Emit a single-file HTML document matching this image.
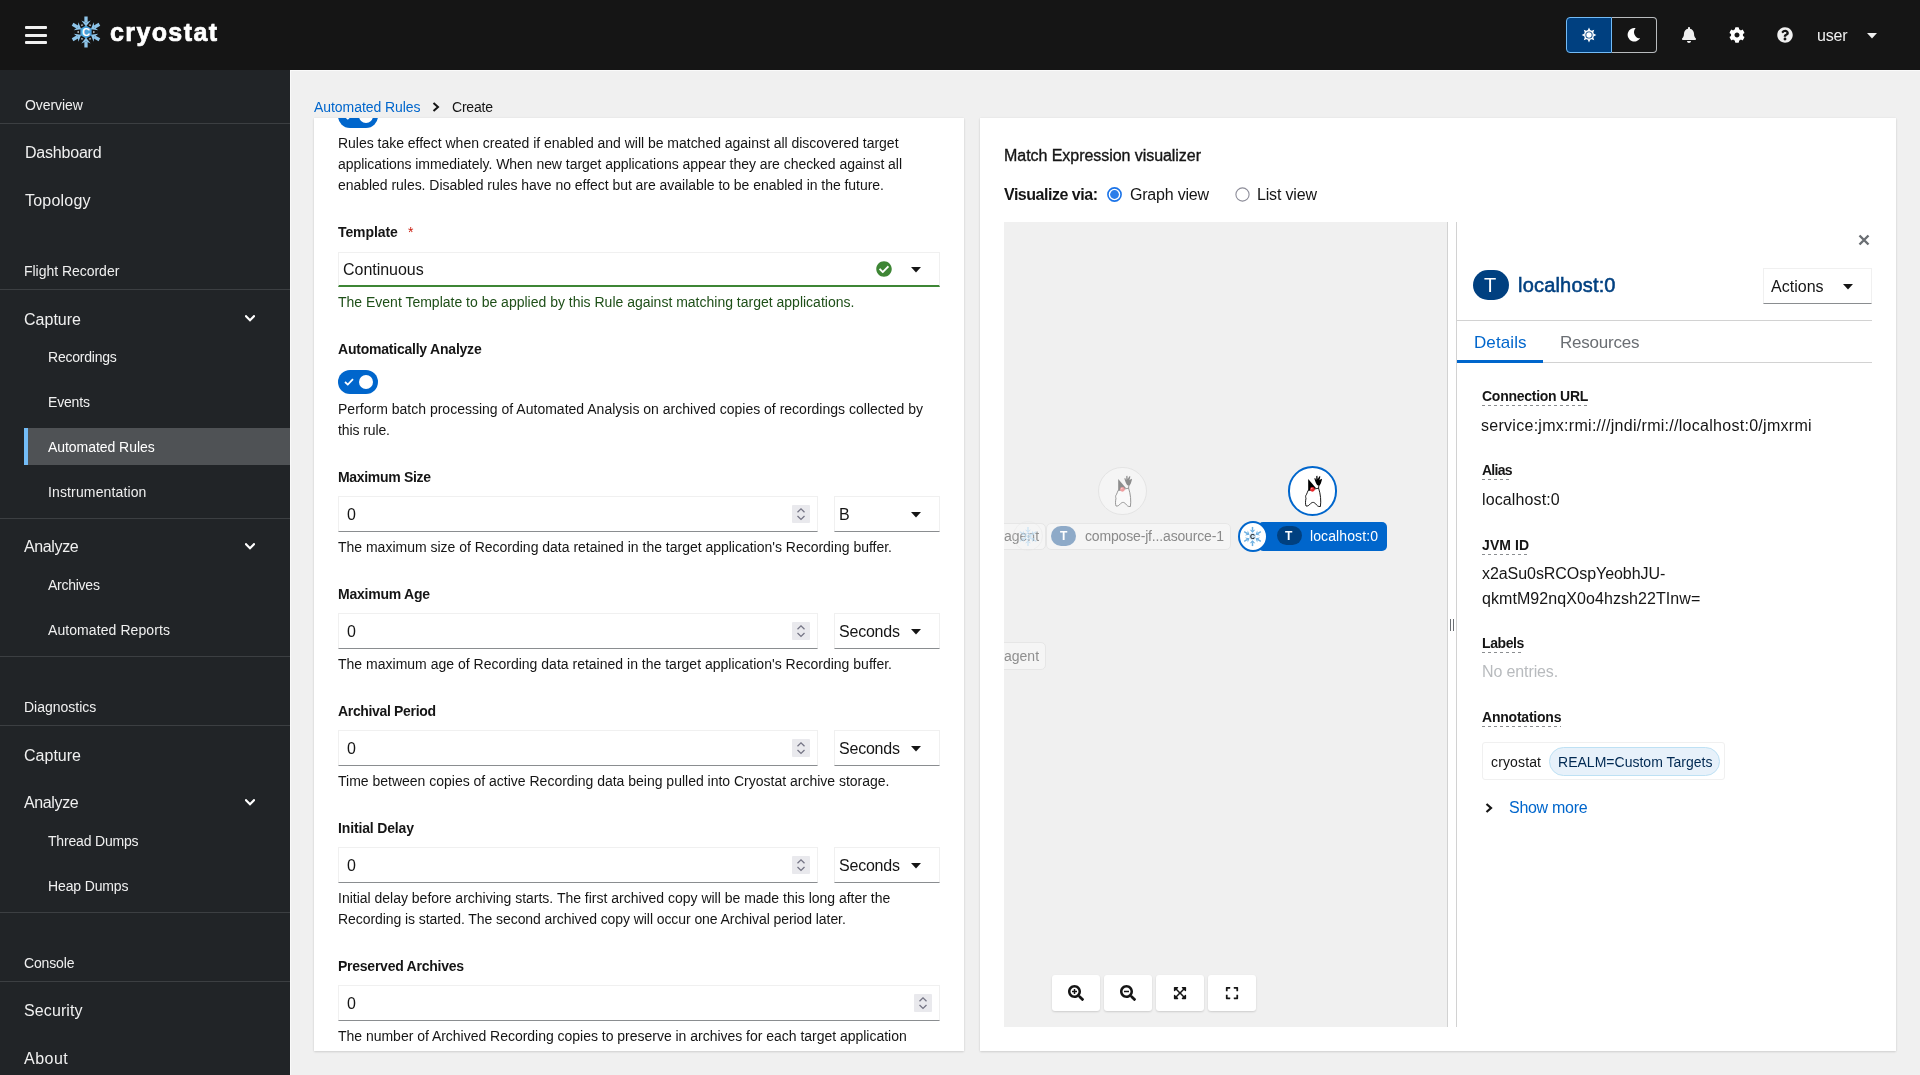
<!DOCTYPE html>
<html><head><meta charset="utf-8"><style>
html,body{margin:0;padding:0;width:1920px;height:1075px;overflow:hidden;background:#f0f0f0;font-family:"Liberation Sans",sans-serif}
.t{position:absolute;white-space:nowrap;will-change:transform}
</style></head><body>
<div style="position:absolute;left:0px;top:0px;width:1920px;height:70px;background:#151515"></div>
<div style="position:absolute;left:0px;top:70px;width:290px;height:1005px;background:#212427"></div>
<div style="position:absolute;left:290px;top:70px;width:1630px;height:1005px;background:#f0f0f0"></div>
<div style="position:absolute;left:290px;top:70px;width:1630px;height:1px;background:#fafafa"></div>
<div style="position:absolute;left:290px;top:70px;width:1px;height:1005px;background:#fafafa"></div>
<div style="position:absolute;left:25px;top:26px;width:22px;height:3px;background:#f0f0f0;border-radius:1px"></div>
<div style="position:absolute;left:25px;top:33.5px;width:22px;height:3px;background:#f0f0f0;border-radius:1px"></div>
<div style="position:absolute;left:25px;top:41px;width:22px;height:3px;background:#f0f0f0;border-radius:1px"></div>
<svg style="position:absolute;left:70px;top:15px;" width="32" height="34" viewBox="0 0 32 34"><line x1="16.00" y1="7.39" x2="16.00" y2="1.50" stroke="#8ec5ea" stroke-width="3.30"/><polygon points="16.00,11.42 11.35,5.53 16.00,7.39 20.65,5.53" fill="#8ec5ea"/><line x1="7.68" y1="12.20" x2="2.58" y2="9.25" stroke="#8ec5ea" stroke-width="3.30"/><polygon points="11.17,14.21 3.74,15.29 7.68,12.20 8.39,7.24" fill="#8ec5ea"/><line x1="7.68" y1="21.80" x2="2.58" y2="24.75" stroke="#8ec5ea" stroke-width="3.30"/><polygon points="11.17,19.79 8.39,26.76 7.68,21.80 3.74,18.71" fill="#8ec5ea"/><line x1="16.00" y1="26.61" x2="16.00" y2="32.50" stroke="#8ec5ea" stroke-width="3.30"/><polygon points="16.00,22.58 20.65,28.47 16.00,26.61 11.35,28.47" fill="#8ec5ea"/><line x1="24.32" y1="21.81" x2="29.42" y2="24.75" stroke="#8ec5ea" stroke-width="3.30"/><polygon points="20.83,19.79 28.26,18.71 24.32,21.81 23.61,26.76" fill="#8ec5ea"/><line x1="24.32" y1="12.20" x2="29.42" y2="9.25" stroke="#8ec5ea" stroke-width="3.30"/><polygon points="20.83,14.21 23.61,7.24 24.32,12.20 28.26,15.29" fill="#8ec5ea"/><polygon points="16.00,10.49 10.36,13.75 10.36,20.26 16.00,23.51 21.64,20.26 21.64,13.75" fill="#4a9fd8"/><polygon points="11.28,11.31 13.43,10.07 11.51,9.21" fill="#e8f4fc"/><polygon points="8.71,18.24 8.71,15.76 7.01,17.00" fill="#e8f4fc"/><polygon points="13.43,23.93 11.28,22.69 11.50,24.79" fill="#e8f4fc"/><polygon points="20.72,22.69 18.57,23.93 20.50,24.79" fill="#e8f4fc"/><polygon points="23.29,15.76 23.29,18.24 24.99,17.00" fill="#e8f4fc"/><polygon points="18.57,10.07 20.72,11.31 20.49,9.21" fill="#e8f4fc"/><text x="16.00" y="21.19" font-family="Liberation Sans" font-weight="700" font-size="11.16" fill="#fff" text-anchor="middle">C</text></svg>
<div id="t1" class="t" style="left:110.0px;top:20.00px;font-size:25px;line-height:25px;color:#ffffff;font-weight:700;letter-spacing:1.391px;-webkit-text-stroke:0.7px #fff;">cryostat</div>
<div style="position:absolute;left:1566px;top:17px;width:46px;height:36px;background:#004080;border:1.5px solid #73bcf7;border-radius:4px 0 0 4px;box-sizing:border-box"></div>
<div style="position:absolute;left:1612px;top:17px;width:45px;height:36px;background:#151515;border:1.5px solid #b8bbbe;border-left:none;border-radius:0 4px 4px 0;box-sizing:border-box"></div>
<svg style="position:absolute;left:1581px;top:27px;" width="16" height="16" viewBox="0 0 16 16"><polygon points="15.40,8.00 12.37,6.55 12.37,9.45" fill="#fff"/><polygon points="13.23,13.23 12.11,10.06 10.06,12.11" fill="#fff"/><polygon points="8.00,15.40 9.45,12.37 6.55,12.37" fill="#fff"/><polygon points="2.77,13.23 5.94,12.11 3.89,10.06" fill="#fff"/><polygon points="0.60,8.00 3.63,9.45 3.63,6.55" fill="#fff"/><polygon points="2.77,2.77 3.89,5.94 5.94,3.89" fill="#fff"/><polygon points="8.00,0.60 6.55,3.63 9.45,3.63" fill="#fff"/><polygon points="13.23,2.77 10.06,3.89 12.11,5.94" fill="#fff"/><circle cx="8" cy="8" r="4.9" fill="#fff"/><circle cx="8" cy="8" r="3.6" fill="#004080"/><circle cx="8" cy="8" r="2.7" fill="#fff"/></svg>
<svg style="position:absolute;left:1626px;top:27px;" width="14" height="15" viewBox="0 0 14 15"><path d="M9.6 1.0 A6.8 6.8 0 1 0 14.2 11.3 A6.2 6.2 0 0 1 9.6 1.0 Z" fill="#fff"/></svg>
<svg style="position:absolute;left:1682px;top:26px;" width="14" height="18" viewBox="0 0 448 512"><path fill="#f0f0f0" d="M224 512c35.3 0 64-28.7 64-64H160c0 35.3 28.7 64 64 64zm215.4-149.7c-19.3-20.8-55.5-52-55.5-154.3 0-77.7-54.5-139.9-127.9-155.2V32c0-17.7-14.3-32-32-32s-32 14.3-32 32v20.8C118.6 68.1 64.1 130.3 64.1 208c0 102.3-36.2 133.5-55.5 154.3-6 6.4-8.6 14.1-8.6 21.7.1 16.4 13 32 32.1 32h383.8c19.1 0 32-15.6 32.1-32 .1-7.6-2.6-15.3-8.6-21.7z"/></svg>
<svg style="position:absolute;left:1729px;top:27px;" width="16" height="16" viewBox="0 0 512 512"><path fill="#fff" d="M487.4 315.7l-42.6-24.6c4.3-23.2 4.3-47 0-70.2l42.6-24.6c4.9-2.8 7.1-8.6 5.5-14-11.1-35.6-30-67.8-54.7-94.6-3.8-4.1-10-5.1-14.8-2.3L380.8 110c-17.9-15.4-38.5-27.3-60.8-35.1V25.8c0-5.6-3.9-10.5-9.4-11.7-36.7-8.2-74.3-7.8-109.2 0-5.5 1.2-9.4 6.1-9.4 11.7V75c-22.2 7.9-42.8 19.8-60.8 35.1L88.7 85.5c-4.9-2.8-11-1.9-14.8 2.3-24.7 26.7-43.6 58.9-54.7 94.6-1.7 5.4.6 11.2 5.5 14L67.3 221c-4.3 23.2-4.3 47 0 70.2l-42.6 24.6c-4.9 2.8-7.1 8.6-5.5 14 11.1 35.6 30 67.8 54.7 94.6 3.8 4.1 10 5.1 14.8 2.3l42.6-24.6c17.9 15.4 38.5 27.3 60.8 35.1v49.2c0 5.6 3.9 10.5 9.4 11.7 36.7 8.2 74.3 7.8 109.2 0 5.5-1.2 9.4-6.1 9.4-11.7v-49.2c22.2-7.9 42.8-19.8 60.8-35.1l42.6 24.6c4.9 2.8 11 1.9 14.8-2.3 24.7-26.7 43.6-58.9 54.7-94.6 1.5-5.5-.7-11.3-5.6-14.1zM256 336c-44.1 0-80-35.9-80-80s35.9-80 80-80 80 35.9 80 80-35.9 80-80 80z"/></svg>
<svg style="position:absolute;left:1777px;top:27px;" width="16" height="16" viewBox="0 0 512 512"><path fill="#f0f0f0" d="M504 256c0 136.997-111.043 248-248 248S8 392.997 8 256C8 119.083 119.043 8 256 8s248 111.083 248 248zM262.655 90c-54.497 0-89.255 22.957-116.549 63.758-3.536 5.286-2.353 12.415 2.715 16.258l34.699 26.31c5.205 3.947 12.621 3.008 16.665-2.122 17.864-22.658 30.113-35.797 57.303-35.797 20.429 0 45.698 13.148 45.698 32.958 0 14.976-12.363 22.667-32.534 33.976C247.128 238.528 216 254.941 216 296v4c0 6.627 5.373 12 12 12h56c6.627 0 12-5.373 12-12v-1.333c0-28.462 83.186-29.647 83.186-106.667 0-58.002-60.165-102-116.531-102zM256 338c-25.365 0-46 20.635-46 46 0 25.364 20.635 46 46 46s46-20.636 46-46c0-25.365-20.635-46-46-46z"/></svg>
<div id="t2" class="t" style="left:1817.0px;top:28.00px;font-size:16px;line-height:16px;color:#f0f0f0;font-weight:400;letter-spacing:-0.208px;">user</div>
<svg style="position:absolute;left:1867px;top:32.5px;" width="10" height="6" viewBox="0 0 10 6"><path d="M0 0 H10 L5 5.6 Z" fill="#f0f0f0"/></svg>
<div id="t3" class="t" style="left:24.5px;top:98.00px;font-size:14px;line-height:14px;color:#f0f0f0;font-weight:400;letter-spacing:-0.080px;">Overview</div>
<div style="position:absolute;left:0px;top:123px;width:290px;height:1px;background:#3c3f42"></div>
<div id="t4" class="t" style="left:24.5px;top:145.00px;font-size:16px;line-height:16px;color:#f0f0f0;font-weight:400;letter-spacing:-0.210px;">Dashboard</div>
<div id="t5" class="t" style="left:24.5px;top:193.00px;font-size:16px;line-height:16px;color:#f0f0f0;font-weight:400;letter-spacing:0.208px;">Topology</div>
<div id="t6" class="t" style="left:24.2px;top:264.00px;font-size:14px;line-height:14px;color:#f0f0f0;font-weight:400;letter-spacing:-0.029px;">Flight Recorder</div>
<div style="position:absolute;left:0px;top:289px;width:290px;height:1px;background:#3c3f42"></div>
<div id="t7" class="t" style="left:24.2px;top:312.00px;font-size:16px;line-height:16px;color:#f0f0f0;font-weight:400;letter-spacing:0.013px;">Capture</div>
<svg style="position:absolute;left:245px;top:314.5px;" width="10" height="7" viewBox="0 0 10 7"><path d="M1 1.2 L5 5.2 L9 1.2" stroke="#fff" stroke-width="2.2" fill="none" stroke-linecap="square"/></svg>
<div id="t8" class="t" style="left:48.4px;top:350.00px;font-size:14px;line-height:14px;color:#f0f0f0;font-weight:400;letter-spacing:-0.225px;">Recordings</div>
<div id="t9" class="t" style="left:48.4px;top:395.00px;font-size:14px;line-height:14px;color:#f0f0f0;font-weight:400;letter-spacing:-0.183px;">Events</div>
<div style="position:absolute;left:24px;top:428px;width:266px;height:37px;background:#4f5255"></div>
<div style="position:absolute;left:24px;top:428px;width:4px;height:37px;background:#73bcf7"></div>
<div id="t10" class="t" style="left:48.4px;top:440.00px;font-size:14px;line-height:14px;color:#ffffff;font-weight:400;letter-spacing:-0.050px;">Automated Rules</div>
<div id="t11" class="t" style="left:48.4px;top:485.00px;font-size:14px;line-height:14px;color:#f0f0f0;font-weight:400;letter-spacing:0.136px;">Instrumentation</div>
<div style="position:absolute;left:0px;top:518px;width:290px;height:1px;background:#3c3f42"></div>
<div id="t12" class="t" style="left:24.2px;top:539.00px;font-size:16px;line-height:16px;color:#f0f0f0;font-weight:400;letter-spacing:-0.370px;">Analyze</div>
<svg style="position:absolute;left:245px;top:542.5px;" width="10" height="7" viewBox="0 0 10 7"><path d="M1 1.2 L5 5.2 L9 1.2" stroke="#fff" stroke-width="2.2" fill="none" stroke-linecap="square"/></svg>
<div id="t13" class="t" style="left:48.4px;top:578.00px;font-size:14px;line-height:14px;color:#f0f0f0;font-weight:400;letter-spacing:-0.255px;">Archives</div>
<div id="t14" class="t" style="left:48.4px;top:623.00px;font-size:14px;line-height:14px;color:#f0f0f0;font-weight:400;letter-spacing:0.080px;">Automated Reports</div>
<div style="position:absolute;left:0px;top:656px;width:290px;height:1px;background:#3c3f42"></div>
<div id="t15" class="t" style="left:24.2px;top:700.00px;font-size:14px;line-height:14px;color:#f0f0f0;font-weight:400;letter-spacing:-0.008px;">Diagnostics</div>
<div style="position:absolute;left:0px;top:725px;width:290px;height:1px;background:#3c3f42"></div>
<div id="t16" class="t" style="left:24.2px;top:748.00px;font-size:16px;line-height:16px;color:#f0f0f0;font-weight:400;letter-spacing:0.013px;">Capture</div>
<div id="t17" class="t" style="left:24.2px;top:795.00px;font-size:16px;line-height:16px;color:#f0f0f0;font-weight:400;letter-spacing:-0.370px;">Analyze</div>
<svg style="position:absolute;left:245px;top:798.5px;" width="10" height="7" viewBox="0 0 10 7"><path d="M1 1.2 L5 5.2 L9 1.2" stroke="#fff" stroke-width="2.2" fill="none" stroke-linecap="square"/></svg>
<div id="t18" class="t" style="left:48.4px;top:834.00px;font-size:14px;line-height:14px;color:#f0f0f0;font-weight:400;letter-spacing:-0.181px;">Thread Dumps</div>
<div id="t19" class="t" style="left:48.4px;top:879.00px;font-size:14px;line-height:14px;color:#f0f0f0;font-weight:400;letter-spacing:-0.134px;">Heap Dumps</div>
<div style="position:absolute;left:0px;top:912px;width:290px;height:1px;background:#3c3f42"></div>
<div id="t20" class="t" style="left:24.2px;top:956.00px;font-size:14px;line-height:14px;color:#f0f0f0;font-weight:400;letter-spacing:-0.146px;">Console</div>
<div style="position:absolute;left:0px;top:981px;width:290px;height:1px;background:#3c3f42"></div>
<div id="t21" class="t" style="left:24.2px;top:1003.00px;font-size:16px;line-height:16px;color:#f0f0f0;font-weight:400;letter-spacing:0.115px;">Security</div>
<div id="t22" class="t" style="left:24.2px;top:1051.00px;font-size:16px;line-height:16px;color:#f0f0f0;font-weight:400;letter-spacing:0.497px;">About</div>
<div id="t23" class="t" style="left:314.4px;top:100.00px;font-size:14px;line-height:14px;color:#0066cc;font-weight:400;letter-spacing:-0.058px;">Automated Rules</div>
<svg style="position:absolute;left:432px;top:102px;" width="8" height="10" viewBox="0 0 8 10"><path d="M1.5 1 L6 5 L1.5 9" stroke="#151515" stroke-width="2" fill="none"/></svg>
<div id="t24" class="t" style="left:451.9px;top:100.00px;font-size:14px;line-height:14px;color:#151515;font-weight:400;letter-spacing:-0.206px;">Create</div>
<div style="position:absolute;left:314px;top:118px;width:650px;height:933px;background:#fff;box-shadow:0 1px 2px 0 rgba(3,3,3,0.12),0 0 2px 0 rgba(3,3,3,0.06)"></div>
<div style="position:absolute;left:980px;top:118px;width:916px;height:933px;background:#fff;box-shadow:0 1px 2px 0 rgba(3,3,3,0.12),0 0 2px 0 rgba(3,3,3,0.06)"></div>
<div style="position:absolute;left:314px;top:118px;width:650px;height:933px;overflow:hidden">
<div style="position:absolute;left:-314px;top:-118px;width:1920px;height:1075px">
<div style="position:absolute;left:338px;top:104px;width:40px;height:24px;background:#0066cc;border-radius:12px"></div>
<div style="position:absolute;left:359px;top:109px;width:14px;height:14px;background:#fff;border-radius:50%"></div>
<svg style="position:absolute;left:344px;top:112px;" width="10" height="8" viewBox="0 0 10 8"><path d="M1 4 L3.8 6.6 L9 1.2" stroke="#fff" stroke-width="1.8" fill="none"/></svg>
<div id="t25" class="t" style="left:338.1px;top:136.00px;font-size:14px;line-height:14px;color:#151515;font-weight:400;letter-spacing:-0.021px;">Rules take effect when created if enabled and will be matched against all discovered target</div>
<div id="t26" class="t" style="left:338.1px;top:157.00px;font-size:14px;line-height:14px;color:#151515;font-weight:400;letter-spacing:-0.043px;">applications immediately. When new target applications appear they are checked against all</div>
<div id="t27" class="t" style="left:338.1px;top:178.00px;font-size:14px;line-height:14px;color:#151515;font-weight:400;letter-spacing:-0.036px;">enabled rules. Disabled rules have no effect but are available to be enabled in the future.</div>
<div id="t28" class="t" style="left:338.1px;top:225.00px;font-size:14px;line-height:14px;color:#151515;font-weight:700;letter-spacing:-0.091px;">Template</div>
<div id="t29" class="t" style="left:407.5px;top:225.00px;font-size:14px;line-height:14px;color:#c9190b;font-weight:400;">*</div>
<div style="position:absolute;left:338px;top:251.5px;width:602px;height:35.5px;background:#fff;border:1px solid #f0f0f0;border-bottom:2px solid #3e8635;box-sizing:border-box"></div>
<div id="t30" class="t" style="left:342.5px;top:262.00px;font-size:16px;line-height:16px;color:#151515;font-weight:400;letter-spacing:-0.028px;">Continuous</div>
<svg style="position:absolute;left:876px;top:261px;" width="16" height="16" viewBox="0 0 512 512"><path fill="#3e8635" d="M504 256c0 136.967-111.033 248-248 248S8 392.967 8 256 119.033 8 256 8s248 111.033 248 248zM227.314 387.314l184-184c6.248-6.248 6.248-16.379 0-22.627l-22.627-22.627c-6.248-6.249-16.379-6.249-22.628 0L216 308.118l-70.059-70.059c-6.248-6.248-16.379-6.248-22.628 0l-22.627 22.627c-6.248 6.248-6.248 16.379 0 22.627l104 104c6.249 6.249 16.379 6.249 22.628.001z"/></svg>
<svg style="position:absolute;left:911px;top:267px;" width="10" height="6" viewBox="0 0 10 6"><path d="M0 0 H10 L5 5.5 Z" fill="#151515"/></svg>
<div id="t31" class="t" style="left:338.1px;top:295.00px;font-size:14px;line-height:14px;color:#1e4f18;font-weight:400;letter-spacing:-0.002px;">The Event Template to be applied by this Rule against matching target applications.</div>
<div id="t32" class="t" style="left:338.3px;top:342.00px;font-size:14px;line-height:14px;color:#151515;font-weight:700;letter-spacing:-0.220px;">Automatically Analyze</div>
<div style="position:absolute;left:338px;top:370px;width:40px;height:24px;background:#0066cc;border-radius:12px"></div>
<div style="position:absolute;left:359px;top:375px;width:14px;height:14px;background:#fff;border-radius:50%"></div>
<svg style="position:absolute;left:344px;top:378px;" width="10" height="8" viewBox="0 0 10 8"><path d="M1 4 L3.8 6.6 L9 1.2" stroke="#fff" stroke-width="1.8" fill="none"/></svg>
<div id="t33" class="t" style="left:338.1px;top:402.00px;font-size:14px;line-height:14px;color:#151515;font-weight:400;letter-spacing:0.006px;">Perform batch processing of Automated Analysis on archived copies of recordings collected by</div>
<div id="t34" class="t" style="left:338.1px;top:423.00px;font-size:14px;line-height:14px;color:#151515;font-weight:400;letter-spacing:-0.102px;">this rule.</div>
<div id="t35" class="t" style="left:338.3px;top:470.00px;font-size:14px;line-height:14px;color:#151515;font-weight:700;letter-spacing:-0.317px;">Maximum Size</div>
<div style="position:absolute;left:338px;top:496.4px;width:480px;height:36px;background:#fff;border:1px solid #f0f0f0;border-bottom:1px solid #8a8d90;box-sizing:border-box"></div>
<div id="t36" class="t" style="left:346.7px;top:507.00px;font-size:16px;line-height:16px;color:#151515;font-weight:400;">0</div>
<div style="position:absolute;left:792px;top:505.4px;width:18px;height:17.5px;background:#e9e9ed;border-radius:1px"></div>
<svg style="position:absolute;left:796px;top:507.9px;" width="10" height="13" viewBox="0 0 10 13"><path d="M1.5 4.3 L5 0.9 L8.5 4.3 M1.5 8 L5 11.4 L8.5 8" stroke="#747484" stroke-width="1.3" fill="none"/></svg>
<div style="position:absolute;left:834px;top:496.4px;width:106px;height:36px;background:#fff;border:1px solid #f0f0f0;border-bottom:1px solid #8a8d90;box-sizing:border-box"></div>
<div id="t37" class="t" style="left:839.0px;top:507.00px;font-size:16px;line-height:16px;color:#151515;font-weight:400;letter-spacing:1.328px;">B</div>
<svg style="position:absolute;left:911px;top:511.9px;" width="10" height="6" viewBox="0 0 10 6"><path d="M0 0 H10 L5 5.5 Z" fill="#151515"/></svg>
<div id="t38" class="t" style="left:338.1px;top:540.00px;font-size:14px;line-height:14px;color:#151515;font-weight:400;letter-spacing:-0.011px;">The maximum size of Recording data retained in the target application's Recording buffer.</div>
<div id="t39" class="t" style="left:338.3px;top:587.00px;font-size:14px;line-height:14px;color:#151515;font-weight:700;letter-spacing:-0.239px;">Maximum Age</div>
<div style="position:absolute;left:338px;top:613.4px;width:480px;height:36px;background:#fff;border:1px solid #f0f0f0;border-bottom:1px solid #8a8d90;box-sizing:border-box"></div>
<div id="t40" class="t" style="left:346.7px;top:624.00px;font-size:16px;line-height:16px;color:#151515;font-weight:400;">0</div>
<div style="position:absolute;left:792px;top:622.4px;width:18px;height:17.5px;background:#e9e9ed;border-radius:1px"></div>
<svg style="position:absolute;left:796px;top:624.9px;" width="10" height="13" viewBox="0 0 10 13"><path d="M1.5 4.3 L5 0.9 L8.5 4.3 M1.5 8 L5 11.4 L8.5 8" stroke="#747484" stroke-width="1.3" fill="none"/></svg>
<div style="position:absolute;left:834px;top:613.4px;width:106px;height:36px;background:#fff;border:1px solid #f0f0f0;border-bottom:1px solid #8a8d90;box-sizing:border-box"></div>
<div id="t41" class="t" style="left:839.0px;top:624.00px;font-size:16px;line-height:16px;color:#151515;font-weight:400;letter-spacing:-0.211px;">Seconds</div>
<svg style="position:absolute;left:911px;top:628.9px;" width="10" height="6" viewBox="0 0 10 6"><path d="M0 0 H10 L5 5.5 Z" fill="#151515"/></svg>
<div id="t42" class="t" style="left:338.1px;top:657.00px;font-size:14px;line-height:14px;color:#151515;font-weight:400;letter-spacing:0.007px;">The maximum age of Recording data retained in the target application's Recording buffer.</div>
<div id="t43" class="t" style="left:338.3px;top:704.00px;font-size:14px;line-height:14px;color:#151515;font-weight:700;letter-spacing:-0.336px;">Archival Period</div>
<div style="position:absolute;left:338px;top:730.4px;width:480px;height:36px;background:#fff;border:1px solid #f0f0f0;border-bottom:1px solid #8a8d90;box-sizing:border-box"></div>
<div id="t44" class="t" style="left:346.7px;top:741.00px;font-size:16px;line-height:16px;color:#151515;font-weight:400;">0</div>
<div style="position:absolute;left:792px;top:739.4px;width:18px;height:17.5px;background:#e9e9ed;border-radius:1px"></div>
<svg style="position:absolute;left:796px;top:741.9px;" width="10" height="13" viewBox="0 0 10 13"><path d="M1.5 4.3 L5 0.9 L8.5 4.3 M1.5 8 L5 11.4 L8.5 8" stroke="#747484" stroke-width="1.3" fill="none"/></svg>
<div style="position:absolute;left:834px;top:730.4px;width:106px;height:36px;background:#fff;border:1px solid #f0f0f0;border-bottom:1px solid #8a8d90;box-sizing:border-box"></div>
<div id="t45" class="t" style="left:839.0px;top:741.00px;font-size:16px;line-height:16px;color:#151515;font-weight:400;letter-spacing:-0.211px;">Seconds</div>
<svg style="position:absolute;left:911px;top:745.9px;" width="10" height="6" viewBox="0 0 10 6"><path d="M0 0 H10 L5 5.5 Z" fill="#151515"/></svg>
<div id="t46" class="t" style="left:338.1px;top:774.00px;font-size:14px;line-height:14px;color:#151515;font-weight:400;letter-spacing:-0.006px;">Time between copies of active Recording data being pulled into Cryostat archive storage.</div>
<div id="t47" class="t" style="left:338.3px;top:821.00px;font-size:14px;line-height:14px;color:#151515;font-weight:700;letter-spacing:-0.151px;">Initial Delay</div>
<div style="position:absolute;left:338px;top:847.4px;width:480px;height:36px;background:#fff;border:1px solid #f0f0f0;border-bottom:1px solid #8a8d90;box-sizing:border-box"></div>
<div id="t48" class="t" style="left:346.7px;top:858.00px;font-size:16px;line-height:16px;color:#151515;font-weight:400;">0</div>
<div style="position:absolute;left:792px;top:856.4px;width:18px;height:17.5px;background:#e9e9ed;border-radius:1px"></div>
<svg style="position:absolute;left:796px;top:858.9px;" width="10" height="13" viewBox="0 0 10 13"><path d="M1.5 4.3 L5 0.9 L8.5 4.3 M1.5 8 L5 11.4 L8.5 8" stroke="#747484" stroke-width="1.3" fill="none"/></svg>
<div style="position:absolute;left:834px;top:847.4px;width:106px;height:36px;background:#fff;border:1px solid #f0f0f0;border-bottom:1px solid #8a8d90;box-sizing:border-box"></div>
<div id="t49" class="t" style="left:839.0px;top:858.00px;font-size:16px;line-height:16px;color:#151515;font-weight:400;letter-spacing:-0.211px;">Seconds</div>
<svg style="position:absolute;left:911px;top:862.9px;" width="10" height="6" viewBox="0 0 10 6"><path d="M0 0 H10 L5 5.5 Z" fill="#151515"/></svg>
<div id="t50" class="t" style="left:338.1px;top:891.00px;font-size:14px;line-height:14px;color:#151515;font-weight:400;letter-spacing:-0.008px;">Initial delay before archiving starts. The first archived copy will be made this long after the</div>
<div id="t51" class="t" style="left:338.1px;top:912.00px;font-size:14px;line-height:14px;color:#151515;font-weight:400;letter-spacing:-0.076px;">Recording is started. The second archived copy will occur one Archival period later.</div>
<div id="t52" class="t" style="left:338.3px;top:959.00px;font-size:14px;line-height:14px;color:#151515;font-weight:700;letter-spacing:-0.249px;">Preserved Archives</div>
<div style="position:absolute;left:338px;top:985.3px;width:602px;height:36px;background:#fff;border:1px solid #f0f0f0;border-bottom:1px solid #8a8d90;box-sizing:border-box"></div>
<div id="t53" class="t" style="left:346.7px;top:996.00px;font-size:16px;line-height:16px;color:#151515;font-weight:400;">0</div>
<div style="position:absolute;left:914px;top:994.3px;width:18px;height:17.5px;background:#e9e9ed;border-radius:1px"></div>
<svg style="position:absolute;left:918px;top:996.8px;" width="10" height="13" viewBox="0 0 10 13"><path d="M1.5 4.3 L5 0.9 L8.5 4.3 M1.5 8 L5 11.4 L8.5 8" stroke="#747484" stroke-width="1.3" fill="none"/></svg>
<div id="t54" class="t" style="left:338.1px;top:1029.00px;font-size:14px;line-height:14px;color:#151515;font-weight:400;letter-spacing:-0.019px;">The number of Archived Recording copies to preserve in archives for each target application</div>
</div></div>
<div id="t55" class="t" style="left:1004.2px;top:148.00px;font-size:16px;line-height:16px;color:#151515;font-weight:400;letter-spacing:-0.050px;-webkit-text-stroke:0.35px #151515;">Match Expression visualizer</div>
<div id="t56" class="t" style="left:1004.2px;top:187.00px;font-size:16px;line-height:16px;color:#151515;font-weight:700;letter-spacing:-0.477px;">Visualize via:</div>
<svg style="position:absolute;left:1107.3px;top:186.5px;" width="15" height="15" viewBox="0 0 15 15"><circle cx="7.5" cy="7.5" r="6.6" fill="#fff" stroke="#1a73e8" stroke-width="1.6"/><circle cx="7.5" cy="7.5" r="4.4" fill="#2b7de9"/></svg>
<div id="t57" class="t" style="left:1129.9px;top:187.00px;font-size:16px;line-height:16px;color:#151515;font-weight:400;letter-spacing:-0.214px;">Graph view</div>
<svg style="position:absolute;left:1234.5px;top:186.5px;" width="15" height="15" viewBox="0 0 15 15"><circle cx="7.5" cy="7.5" r="6.6" fill="#fff" stroke="#8d8d99" stroke-width="1.1"/></svg>
<div id="t58" class="t" style="left:1257.4px;top:187.00px;font-size:16px;line-height:16px;color:#151515;font-weight:400;letter-spacing:-0.170px;">List view</div>
<div style="position:absolute;left:1004px;top:222px;width:443px;height:805px;background:#f0f0f0"></div>
<div style="position:absolute;left:1447px;top:222px;width:1px;height:805px;background:#d2d2d2"></div>
<div style="position:absolute;left:1456px;top:222px;width:1px;height:805px;background:#d2d2d2"></div>
<div style="position:absolute;left:1450px;top:619px;width:1px;height:12px;background:#6a6e73"></div>
<div style="position:absolute;left:1453px;top:619px;width:1px;height:12px;background:#6a6e73"></div>
<div style="position:absolute;left:1004px;top:222px;width:443px;height:805px;overflow:hidden">
<div style="position:absolute;left:-1004px;top:-222px;width:1920px;height:1075px">
<div style="position:absolute;left:1098.2px;top:466.8px;width:48.5px;height:48.5px;border-radius:50%;background:#f5f5f5;border:1px solid #e4e4e4;box-sizing:border-box"></div>
<svg style="position:absolute;left:1112.5px;top:475px;opacity:0.42;" width="20" height="32" viewBox="0 0 20 32"><path d="M5.2 15.3 C4.6 17 3.8 18.6 3.3 19.8 C2.4 20.6 2.5 22.2 3 23.2 C2.5 25.8 2.2 28.8 3 31 C4.6 31.4 6 30.4 7.2 29 C8.8 27.2 10.8 26.6 12.6 28.8 C13.8 30.4 15 31.8 17.4 31.6 C18.2 26 17.6 19 15.6 13.2 Z" fill="#fff" stroke="#000" stroke-width="0.9"/><path d="M5.2 4 L12.9 12.9 C11 14.6 8.4 15.6 5.2 15.5 Z" fill="#000"/><path d="M15.6 13.4 L15.9 9.6" stroke="#000" stroke-width="0.9"/><path d="M14.3 10.2 C13.2 8.6 12.2 6.4 11.3 3.4 L12.2 3 L13.2 5.2 L13.3 1 L14.4 0.7 L14.7 4.2 L16.4 1.2 L17.4 1.6 L16.4 5.2 L18.4 3.8 L19 4.6 L17.8 8.4 L16.6 10.6 Z" fill="#000"/><circle cx="9.4" cy="14.3" r="2.4" fill="#e8262a"/><circle cx="8.8" cy="13.6" r="0.8" fill="#ff9a9a"/></svg>
<div style="position:absolute;left:960px;top:522.5px;width:86px;height:27px;background:#f5f5f5;border:1px solid #e6e6e6;border-radius:5px;box-sizing:border-box"></div>
<div id="t59" class="t" style="left:1004.0px;top:529.00px;font-size:14px;line-height:14px;color:#8f8f8f;font-weight:400;">agent</div>
<div style="position:absolute;left:1013px;top:521px;width:30px;height:30px;border-radius:50%;border:1px solid #e8e8e8;box-sizing:border-box;opacity:0.5"></div>
<svg style="position:absolute;left:1018px;top:526px;opacity:0.7" width="20" height="21" viewBox="0 0 32 34"><line x1="16.00" y1="7.39" x2="16.00" y2="1.50" stroke="#bcdcf2" stroke-width="2.20"/><polygon points="16.00,11.42 11.35,5.53 16.00,7.39 20.65,5.53" fill="#bcdcf2"/><line x1="7.68" y1="12.20" x2="2.58" y2="9.25" stroke="#bcdcf2" stroke-width="2.20"/><polygon points="11.17,14.21 3.74,15.29 7.68,12.20 8.39,7.24" fill="#bcdcf2"/><line x1="7.68" y1="21.80" x2="2.58" y2="24.75" stroke="#bcdcf2" stroke-width="2.20"/><polygon points="11.17,19.79 8.39,26.76 7.68,21.80 3.74,18.71" fill="#bcdcf2"/><line x1="16.00" y1="26.61" x2="16.00" y2="32.50" stroke="#bcdcf2" stroke-width="2.20"/><polygon points="16.00,22.58 20.65,28.47 16.00,26.61 11.35,28.47" fill="#bcdcf2"/><line x1="24.32" y1="21.81" x2="29.42" y2="24.75" stroke="#bcdcf2" stroke-width="2.20"/><polygon points="20.83,19.79 28.26,18.71 24.32,21.81 23.61,26.76" fill="#bcdcf2"/><line x1="24.32" y1="12.20" x2="29.42" y2="9.25" stroke="#bcdcf2" stroke-width="2.20"/><polygon points="20.83,14.21 23.61,7.24 24.32,12.20 28.26,15.29" fill="#bcdcf2"/><polygon points="16.00,10.49 10.36,13.75 10.36,20.26 16.00,23.51 21.64,20.26 21.64,13.75" fill="#bcdcf2"/><polygon points="11.28,11.31 13.43,10.07 11.51,9.21" fill="#e8f4fc"/><polygon points="8.71,18.24 8.71,15.76 7.01,17.00" fill="#e8f4fc"/><polygon points="13.43,23.93 11.28,22.69 11.50,24.79" fill="#e8f4fc"/><polygon points="20.72,22.69 18.57,23.93 20.50,24.79" fill="#e8f4fc"/><polygon points="23.29,15.76 23.29,18.24 24.99,17.00" fill="#e8f4fc"/><polygon points="18.57,10.07 20.72,11.31 20.49,9.21" fill="#e8f4fc"/><text x="16.00" y="21.19" font-family="Liberation Sans" font-weight="700" font-size="11.16" fill="#fff" text-anchor="middle">C</text></svg>
<div style="position:absolute;left:1046px;top:522.5px;width:185px;height:27px;background:#f5f5f5;border:1px solid #e6e6e6;border-radius:5px;box-sizing:border-box"></div>
<div style="position:absolute;left:1051px;top:526px;width:25px;height:19.5px;background:#8eaac8;border-radius:10px"></div>
<div id="t60" class="t" style="left:1059.5px;top:530.00px;font-size:12px;line-height:12px;color:#fff;font-weight:700;">T</div>
<div id="t61" class="t" style="left:1085.0px;top:529.00px;font-size:14px;line-height:14px;color:#8a8a8a;font-weight:400;letter-spacing:-0.162px;">compose-jf...asource-1</div>
<div style="position:absolute;left:960px;top:641.6px;width:86px;height:28.5px;background:#f5f5f5;border:1px solid #e6e6e6;border-radius:5px;box-sizing:border-box"></div>
<div id="t62" class="t" style="left:1004.0px;top:649.00px;font-size:14px;line-height:14px;color:#8f8f8f;font-weight:400;">agent</div>
<div style="position:absolute;left:1287.6px;top:466.2px;width:49.4px;height:49.4px;border-radius:50%;background:#fff;border:2.2px solid #0066cc;box-sizing:border-box"></div>
<svg style="position:absolute;left:1303px;top:475px;" width="20" height="32" viewBox="0 0 20 32"><path d="M5.2 15.3 C4.6 17 3.8 18.6 3.3 19.8 C2.4 20.6 2.5 22.2 3 23.2 C2.5 25.8 2.2 28.8 3 31 C4.6 31.4 6 30.4 7.2 29 C8.8 27.2 10.8 26.6 12.6 28.8 C13.8 30.4 15 31.8 17.4 31.6 C18.2 26 17.6 19 15.6 13.2 Z" fill="#fff" stroke="#000" stroke-width="0.9"/><path d="M5.2 4 L12.9 12.9 C11 14.6 8.4 15.6 5.2 15.5 Z" fill="#000"/><path d="M15.6 13.4 L15.9 9.6" stroke="#000" stroke-width="0.9"/><path d="M14.3 10.2 C13.2 8.6 12.2 6.4 11.3 3.4 L12.2 3 L13.2 5.2 L13.3 1 L14.4 0.7 L14.7 4.2 L16.4 1.2 L17.4 1.6 L16.4 5.2 L18.4 3.8 L19 4.6 L17.8 8.4 L16.6 10.6 Z" fill="#000"/><circle cx="9.4" cy="14.3" r="2.4" fill="#e8262a"/><circle cx="8.8" cy="13.6" r="0.8" fill="#ff9a9a"/></svg>
<div style="position:absolute;left:1258px;top:521.5px;width:129px;height:29px;background:#0066cc;border-radius:5px"></div>
<div style="position:absolute;left:1237.8px;top:520.5px;width:30px;height:31px;border-radius:50%;background:#fff;border:2px solid #0066cc;box-sizing:border-box"></div>
<svg style="position:absolute;left:1242px;top:525.5px;" width="21" height="21" viewBox="0 0 32 34"><line x1="16.00" y1="7.39" x2="16.00" y2="1.50" stroke="#6aaee0" stroke-width="2.40"/><polygon points="16.00,11.42 11.35,5.53 16.00,7.39 20.65,5.53" fill="#6aaee0"/><line x1="7.68" y1="12.20" x2="2.58" y2="9.25" stroke="#6aaee0" stroke-width="2.40"/><polygon points="11.17,14.21 3.74,15.29 7.68,12.20 8.39,7.24" fill="#6aaee0"/><line x1="7.68" y1="21.80" x2="2.58" y2="24.75" stroke="#6aaee0" stroke-width="2.40"/><polygon points="11.17,19.79 8.39,26.76 7.68,21.80 3.74,18.71" fill="#6aaee0"/><line x1="16.00" y1="26.61" x2="16.00" y2="32.50" stroke="#6aaee0" stroke-width="2.40"/><polygon points="16.00,22.58 20.65,28.47 16.00,26.61 11.35,28.47" fill="#6aaee0"/><line x1="24.32" y1="21.81" x2="29.42" y2="24.75" stroke="#6aaee0" stroke-width="2.40"/><polygon points="20.83,19.79 28.26,18.71 24.32,21.81 23.61,26.76" fill="#6aaee0"/><line x1="24.32" y1="12.20" x2="29.42" y2="9.25" stroke="#6aaee0" stroke-width="2.40"/><polygon points="20.83,14.21 23.61,7.24 24.32,12.20 28.26,15.29" fill="#6aaee0"/><polygon points="16.00,10.49 10.36,13.75 10.36,20.26 16.00,23.51 21.64,20.26 21.64,13.75" fill="#cfe6f7"/><polygon points="11.28,11.31 13.43,10.07 11.51,9.21" fill="#e8f4fc"/><polygon points="8.71,18.24 8.71,15.76 7.01,17.00" fill="#e8f4fc"/><polygon points="13.43,23.93 11.28,22.69 11.50,24.79" fill="#e8f4fc"/><polygon points="20.72,22.69 18.57,23.93 20.50,24.79" fill="#e8f4fc"/><polygon points="23.29,15.76 23.29,18.24 24.99,17.00" fill="#e8f4fc"/><polygon points="18.57,10.07 20.72,11.31 20.49,9.21" fill="#e8f4fc"/><text x="16.00" y="21.19" font-family="Liberation Sans" font-weight="700" font-size="11.16" fill="#151515" text-anchor="middle">C</text></svg>
<div style="position:absolute;left:1276.7px;top:526.3px;width:25px;height:19.2px;background:#004080;border-radius:10px"></div>
<div id="t63" class="t" style="left:1285.3px;top:530.00px;font-size:12px;line-height:12px;color:#fff;font-weight:700;">T</div>
<div id="t64" class="t" style="left:1310.0px;top:529.00px;font-size:14px;line-height:14px;color:#ffffff;font-weight:400;letter-spacing:0.106px;">localhost:0</div>
<div style="position:absolute;left:1052px;top:975px;width:48px;height:36px;background:#fff;border-radius:3px;box-shadow:0 1px 2px rgba(0,0,0,0.15)"></div>
<svg style="position:absolute;left:1068px;top:985px" width="16" height="16" viewBox="0 0 512 512"><path d="M505 442.7L405.3 343c-4.5-4.5-10.6-7-17-7H372c27.6-35.3 44-79.7 44-128C416 93.1 322.9 0 208 0S0 93.1 0 208s93.1 208 208 208c48.3 0 92.7-16.4 128-44v16.3c0 6.4 2.5 12.5 7 17l99.7 99.7c9.4 9.4 24.6 9.4 33.9 0l28.3-28.3c9.4-9.4 9.4-24.6.1-34zM208 336c-70.7 0-128-57.2-128-128 0-70.7 57.2-128 128-128 70.7 0 128 57.2 128 128 0 70.7-57.2 128-128 128z" fill="#151515"/><path d="M184 128h48v56h56v48h-56v56h-48v-56h-56v-48h56z" fill="#151515"/></svg>
<div style="position:absolute;left:1104px;top:975px;width:48px;height:36px;background:#fff;border-radius:3px;box-shadow:0 1px 2px rgba(0,0,0,0.15)"></div>
<svg style="position:absolute;left:1120px;top:985px" width="16" height="16" viewBox="0 0 512 512"><path d="M505 442.7L405.3 343c-4.5-4.5-10.6-7-17-7H372c27.6-35.3 44-79.7 44-128C416 93.1 322.9 0 208 0S0 93.1 0 208s93.1 208 208 208c48.3 0 92.7-16.4 128-44v16.3c0 6.4 2.5 12.5 7 17l99.7 99.7c9.4 9.4 24.6 9.4 33.9 0l28.3-28.3c9.4-9.4 9.4-24.6.1-34zM208 336c-70.7 0-128-57.2-128-128 0-70.7 57.2-128 128-128 70.7 0 128 57.2 128 128 0 70.7-57.2 128-128 128z" fill="#151515"/><path d="M128 184h160v48H128z" fill="#151515"/></svg>
<div style="position:absolute;left:1156px;top:975px;width:48px;height:36px;background:#fff;border-radius:3px;box-shadow:0 1px 2px rgba(0,0,0,0.15)"></div>
<svg style="position:absolute;left:1173px;top:986px" width="14" height="14" viewBox="0 0 448 512"><path fill="#151515" d="M448 344v112a23.94 23.94 0 0 1-24 24H312c-21.39 0-32.09-25.9-17-41l36.2-36.2L224 295.6 116.77 402.9 153 439c15.09 15.1 4.39 41-17 41H24a23.94 23.94 0 0 1-24-24V344c0-21.4 25.89-32.1 41-17l36.19 36.2L184.46 256 77.18 148.7 41 185c-15.1 15.1-41 4.4-41-17V56a23.94 23.94 0 0 1 24-24h112c21.39 0 32.09 25.9 17 41l-36.2 36.2L224 216.4l107.23-107.3L295 73c-15.09-15.1-4.39-41 17-41h112a23.94 23.94 0 0 1 24 24v112c0 21.4-25.89 32.1-41 17l-36.19-36.2L263.54 256l107.28 107.3L407 327.1c15.1-15.2 41-4.5 41 16.9z"/></svg>
<div style="position:absolute;left:1208px;top:975px;width:48px;height:36px;background:#fff;border-radius:3px;box-shadow:0 1px 2px rgba(0,0,0,0.15)"></div>
<svg style="position:absolute;left:1225px;top:986px" width="14" height="14" viewBox="0 0 448 512"><path fill="#151515" d="M0 180V56c0-13.3 10.7-24 24-24h124c6.6 0 12 5.4 12 12v40c0 6.6-5.4 12-12 12H64v84c0 6.6-5.4 12-12 12H12c-6.6 0-12-5.4-12-12zM288 44v40c0 6.6 5.4 12 12 12h84v84c0 6.6 5.4 12 12 12h40c6.6 0 12-5.4 12-12V56c0-13.3-10.7-24-24-24H300c-6.6 0-12 5.4-12 12zm148 276h-40c-6.6 0-12 5.4-12 12v84h-84c-6.6 0-12 5.4-12 12v40c0 6.6 5.4 12 12 12h124c13.3 0 24-10.7 24-24V332c0-6.6-5.4-12-12-12zM160 468v-40c0-6.6-5.4-12-12-12H64v-84c0-6.6-5.4-12-12-12H12c-6.6 0-12 5.4-12 12v124c0 13.3 10.7 24 24 24h124c6.6 0 12-5.4 12-12z"/></svg>
</div></div>
<svg style="position:absolute;left:1858px;top:234px;" width="12" height="12" viewBox="0 0 12 12"><path d="M1.5 1.5 L10.5 10.5 M10.5 1.5 L1.5 10.5" stroke="#6a6e73" stroke-width="2.4"/></svg>
<div style="position:absolute;left:1473px;top:270px;width:36px;height:30px;background:#004080;border-radius:15px/15px"></div>
<div id="t65" class="t" style="left:1483.5px;top:275.00px;font-size:20px;line-height:20px;color:#fff;font-weight:400;">T</div>
<div id="t66" class="t" style="left:1518.0px;top:275.00px;font-size:20px;line-height:20px;color:#004080;font-weight:400;letter-spacing:0.188px;-webkit-text-stroke:0.55px #004080;">localhost:0</div>
<div style="position:absolute;left:1763px;top:268.4px;width:109px;height:35.2px;background:#fff;border:1px solid #f0f0f0;border-bottom:1px solid #8a8d90;box-sizing:border-box"></div>
<div id="t67" class="t" style="left:1771.0px;top:279.00px;font-size:16px;line-height:16px;color:#151515;font-weight:400;letter-spacing:0.022px;">Actions</div>
<svg style="position:absolute;left:1843px;top:283.7px;" width="10" height="6" viewBox="0 0 10 6"><path d="M0 0 H10 L5 5.5 Z" fill="#151515"/></svg>
<div style="position:absolute;left:1457px;top:320px;width:415px;height:1px;background:#d2d2d2"></div>
<div style="position:absolute;left:1457px;top:362px;width:415px;height:1px;background:#d2d2d2"></div>
<div style="position:absolute;left:1457px;top:360px;width:86px;height:3px;background:#0066cc"></div>
<div id="t68" class="t" style="left:1473.7px;top:334.00px;font-size:17px;line-height:17px;color:#0066cc;font-weight:400;letter-spacing:0.089px;">Details</div>
<div id="t69" class="t" style="left:1559.7px;top:334.00px;font-size:17px;line-height:17px;color:#6a6e73;font-weight:400;letter-spacing:-0.208px;">Resources</div>
<div id="t70" class="t" style="left:1481.5px;top:389.00px;font-size:14px;line-height:14px;color:#151515;font-weight:700;letter-spacing:-0.258px;">Connection URL</div>
<div style="position:absolute;left:1481.5px;top:405.3px;width:106.3px;height:1px;background-image:linear-gradient(to right,#8a8d90 50%,transparent 50%);background-size:6px 1px"></div>
<div id="t71" class="t" style="left:1481.1px;top:418.00px;font-size:16px;line-height:16px;color:#151515;font-weight:400;letter-spacing:0.281px;">service:jmx:rmi:///jndi/rmi://localhost:0/jmxrmi</div>
<div id="t72" class="t" style="left:1481.5px;top:463.00px;font-size:14px;line-height:14px;color:#151515;font-weight:700;letter-spacing:-0.742px;">Alias</div>
<div style="position:absolute;left:1481.5px;top:479.3px;width:30.5px;height:1px;background-image:linear-gradient(to right,#8a8d90 50%,transparent 50%);background-size:6px 1px"></div>
<div id="t73" class="t" style="left:1481.5px;top:492.00px;font-size:16px;line-height:16px;color:#151515;font-weight:400;letter-spacing:0.120px;">localhost:0</div>
<div id="t74" class="t" style="left:1481.5px;top:538.00px;font-size:14px;line-height:14px;color:#151515;font-weight:700;letter-spacing:0.103px;">JVM ID</div>
<div style="position:absolute;left:1481.5px;top:554.1px;width:47.2px;height:1px;background-image:linear-gradient(to right,#8a8d90 50%,transparent 50%);background-size:6px 1px"></div>
<div id="t75" class="t" style="left:1481.6px;top:566.00px;font-size:16px;line-height:16px;color:#151515;font-weight:400;letter-spacing:-0.058px;">x2aSu0sRCOspYeobhJU-</div>
<div id="t76" class="t" style="left:1481.6px;top:591.00px;font-size:16px;line-height:16px;color:#151515;font-weight:400;letter-spacing:0.075px;">qkmtM92nqX0o4hzsh22TInw=</div>
<div id="t77" class="t" style="left:1481.5px;top:636.00px;font-size:14px;line-height:14px;color:#151515;font-weight:700;letter-spacing:-0.412px;">Labels</div>
<div style="position:absolute;left:1481.5px;top:652.1px;width:42.3px;height:1px;background-image:linear-gradient(to right,#8a8d90 50%,transparent 50%);background-size:6px 1px"></div>
<div id="t78" class="t" style="left:1481.6px;top:664.00px;font-size:16px;line-height:16px;color:#b8bbbe;font-weight:400;letter-spacing:-0.117px;">No entries.</div>
<div id="t79" class="t" style="left:1481.5px;top:710.00px;font-size:14px;line-height:14px;color:#151515;font-weight:700;letter-spacing:-0.216px;">Annotations</div>
<div style="position:absolute;left:1481.5px;top:726.3px;width:79.5px;height:1px;background-image:linear-gradient(to right,#8a8d90 50%,transparent 50%);background-size:6px 1px"></div>
<div style="position:absolute;left:1481.5px;top:742.2px;width:243px;height:38.2px;background:#fff;border:1px solid #f0f0f0;border-radius:3px;box-sizing:border-box"></div>
<div id="t80" class="t" style="left:1490.8px;top:755.00px;font-size:14px;line-height:14px;color:#151515;font-weight:400;letter-spacing:0.141px;">cryostat</div>
<div style="position:absolute;left:1549.2px;top:747.1px;width:170.4px;height:28.6px;background:#e7f1fa;border:1px solid #bee1f4;border-radius:15px;box-sizing:border-box"></div>
<div id="t81" class="t" style="left:1557.5px;top:755.00px;font-size:14px;line-height:14px;color:#002952;font-weight:400;letter-spacing:0.016px;">REALM=Custom Targets</div>
<svg style="position:absolute;left:1485px;top:802.5px;" width="8" height="10" viewBox="0 0 8 10"><path d="M1.5 1 L6 5 L1.5 9" stroke="#151515" stroke-width="2.2" fill="none"/></svg>
<div id="t82" class="t" style="left:1509.4px;top:800.00px;font-size:16px;line-height:16px;color:#0066cc;font-weight:400;letter-spacing:-0.290px;">Show more</div>
</body></html>
